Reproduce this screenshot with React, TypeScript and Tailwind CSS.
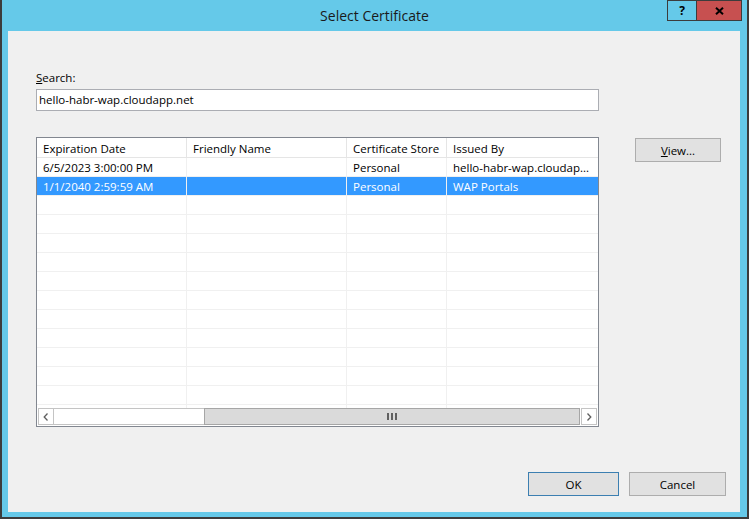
const columns = [
  { title: "Expiration Date", width: "w-[150px]" },
  { title: "Friendly Name", width: "w-[160px]" },
  { title: "Certificate Store", width: "w-[100px]" },
  { title: "Issued By", width: "w-[151px]" },
];

const rows = [
  { cells: ["6/5/2023 3:00:00 PM", "", "Personal", "hello-habr-wap.cloudap..."], selected: false },
  { cells: ["1/1/2040 2:59:59 AM", "", "Personal", "WAP Portals"], selected: true },
];

const emptyRows = Array.from({ length: 12 });

function WinButton({ children, width, primary }: { children: React.ReactNode; width: string; primary?: boolean }) {
  return (
    <button
      className={`${width} h-[24px] bg-[#e1e1e1] border ${
        primary ? "border-[#3c7fb1]" : "border-[#adadad]"
      } text-[11.5px] leading-[15px] text-black flex items-center justify-center`}
    >
      {children}
    </button>
  );
}

function Row({ cells, selected }: { cells: string[]; selected?: boolean }) {
  return (
    <div className={`flex h-[19px] border-b border-[#f0f0f0] ${selected ? "bg-[#3399ff] text-white" : "text-black"}`}>
      {columns.map((c, i) => (
        <div
          key={i}
          className={`${c.width} shrink-0 pl-[6px] pt-[1px] leading-[17px] whitespace-nowrap overflow-hidden ${
            i < columns.length - 1 ? "border-r border-[#f0f0f0]" : ""
          }`}
        >
          {cells[i]}
        </div>
      ))}
    </div>
  );
}

export default function App() {
  return (
    <div className="w-[749px] h-[519px] bg-[#65c9e9] border-l-2 border-r-2 border-b-2 border-[#3c3c3c] flex flex-col font-['Open_Sans',sans-serif] text-[11.5px]">
      {/* title bar */}
      <div className="h-[31px] shrink-0 grid grid-cols-[1fr_auto_1fr]">
        <div />
        <div className="text-[14px] leading-[19px] pt-[6px] text-[#1a1a1a]">Select Certificate</div>
        <div className="flex justify-end items-start pr-[5px]">
          <div className="w-[30px] h-[21px] border border-[#3c3c3c] flex items-center justify-center font-bold text-[12px] text-black leading-none">
            ?
          </div>
          <div className="w-[45px] h-[21px] border border-l-0 border-[#3c3c3c] bg-[#c75050] flex items-center justify-center">
            <svg width="9" height="8" viewBox="0 0 9 8">
              <path d="M1 0.8 L8 7.2 M8 0.8 L1 7.2" stroke="#000" strokeWidth="2" />
            </svg>
          </div>
        </div>
      </div>

      {/* client area */}
      <div className="flex-1 ml-[6px] mr-[7px] mb-[5px] bg-[#f0f0f0] flex flex-col pt-[39px] pl-[28px] text-black">
        <div className="leading-[15px]">
          <span className="underline">S</span>earch:
        </div>
        <div className="mt-[4px] w-[563px] h-[22px] bg-white border border-[#abadb3] pl-[2px] leading-[20px]">
          hello-habr-wap.cloudapp.net
        </div>

        <div className="mt-[26px] flex gap-[36px]">
          <div className="w-[563px] h-[290px] border border-[#828790] bg-white flex flex-col">
            <div className="flex h-[20px] shrink-0 border-b border-[#e5e5e5]">
              {columns.map((c, i) => (
                <div
                  key={c.title}
                  className={`${c.width} shrink-0 pl-[6px] pt-[2px] leading-[17px] whitespace-nowrap ${
                    i < columns.length - 1 ? "border-r border-[#e5e5e5]" : ""
                  }`}
                >
                  {c.title}
                </div>
              ))}
            </div>
            <div className="flex-1 overflow-hidden">
              {rows.map((r, i) => (
                <Row key={i} cells={r.cells} selected={r.selected} />
              ))}
              {emptyRows.map((_, i) => (
                <Row key={"e" + i} cells={["", "", "", ""]} />
              ))}
            </div>
            <div className="h-[17px] shrink-0 mb-[1px] px-[1px] flex">
              <div className="w-[16px] h-full border border-[#c4c4c4] flex items-center justify-center">
                <svg width="6" height="8" viewBox="0 0 6 8">
                  <path d="M4.5 0.5 L1.2 4 L4.5 7.5" stroke="#606060" strokeWidth="1.3" fill="none" />
                </svg>
              </div>
              <div className="w-[150px] h-full border-y border-[#c4c4c4]" />
              <div className="w-[376px] h-full bg-[#dadada] border border-[#a6a6a6] flex items-center justify-center gap-[2px]">
                <div className="w-[2px] h-[7px] bg-[#606060]" />
                <div className="w-[2px] h-[7px] bg-[#606060]" />
                <div className="w-[2px] h-[7px] bg-[#606060]" />
              </div>
              <div className="w-[16px] h-full ml-[1px] border border-[#c4c4c4] flex items-center justify-center">
                <svg width="6" height="8" viewBox="0 0 6 8">
                  <path d="M1.5 0.5 L4.8 4 L1.5 7.5" stroke="#606060" strokeWidth="1.3" fill="none" />
                </svg>
              </div>
            </div>
          </div>
          <div className="mt-[1px]">
            <WinButton width="w-[86px]">
              <span className="underline">V</span>iew...
            </WinButton>
          </div>
        </div>

        <div className="flex-1" />
        <div className="flex justify-end gap-[10px] pr-[14px] pb-[16px]">
          <WinButton width="w-[91px]" primary>
            OK
          </WinButton>
          <WinButton width="w-[97px]">Cancel</WinButton>
        </div>
      </div>
    </div>
  );
}
